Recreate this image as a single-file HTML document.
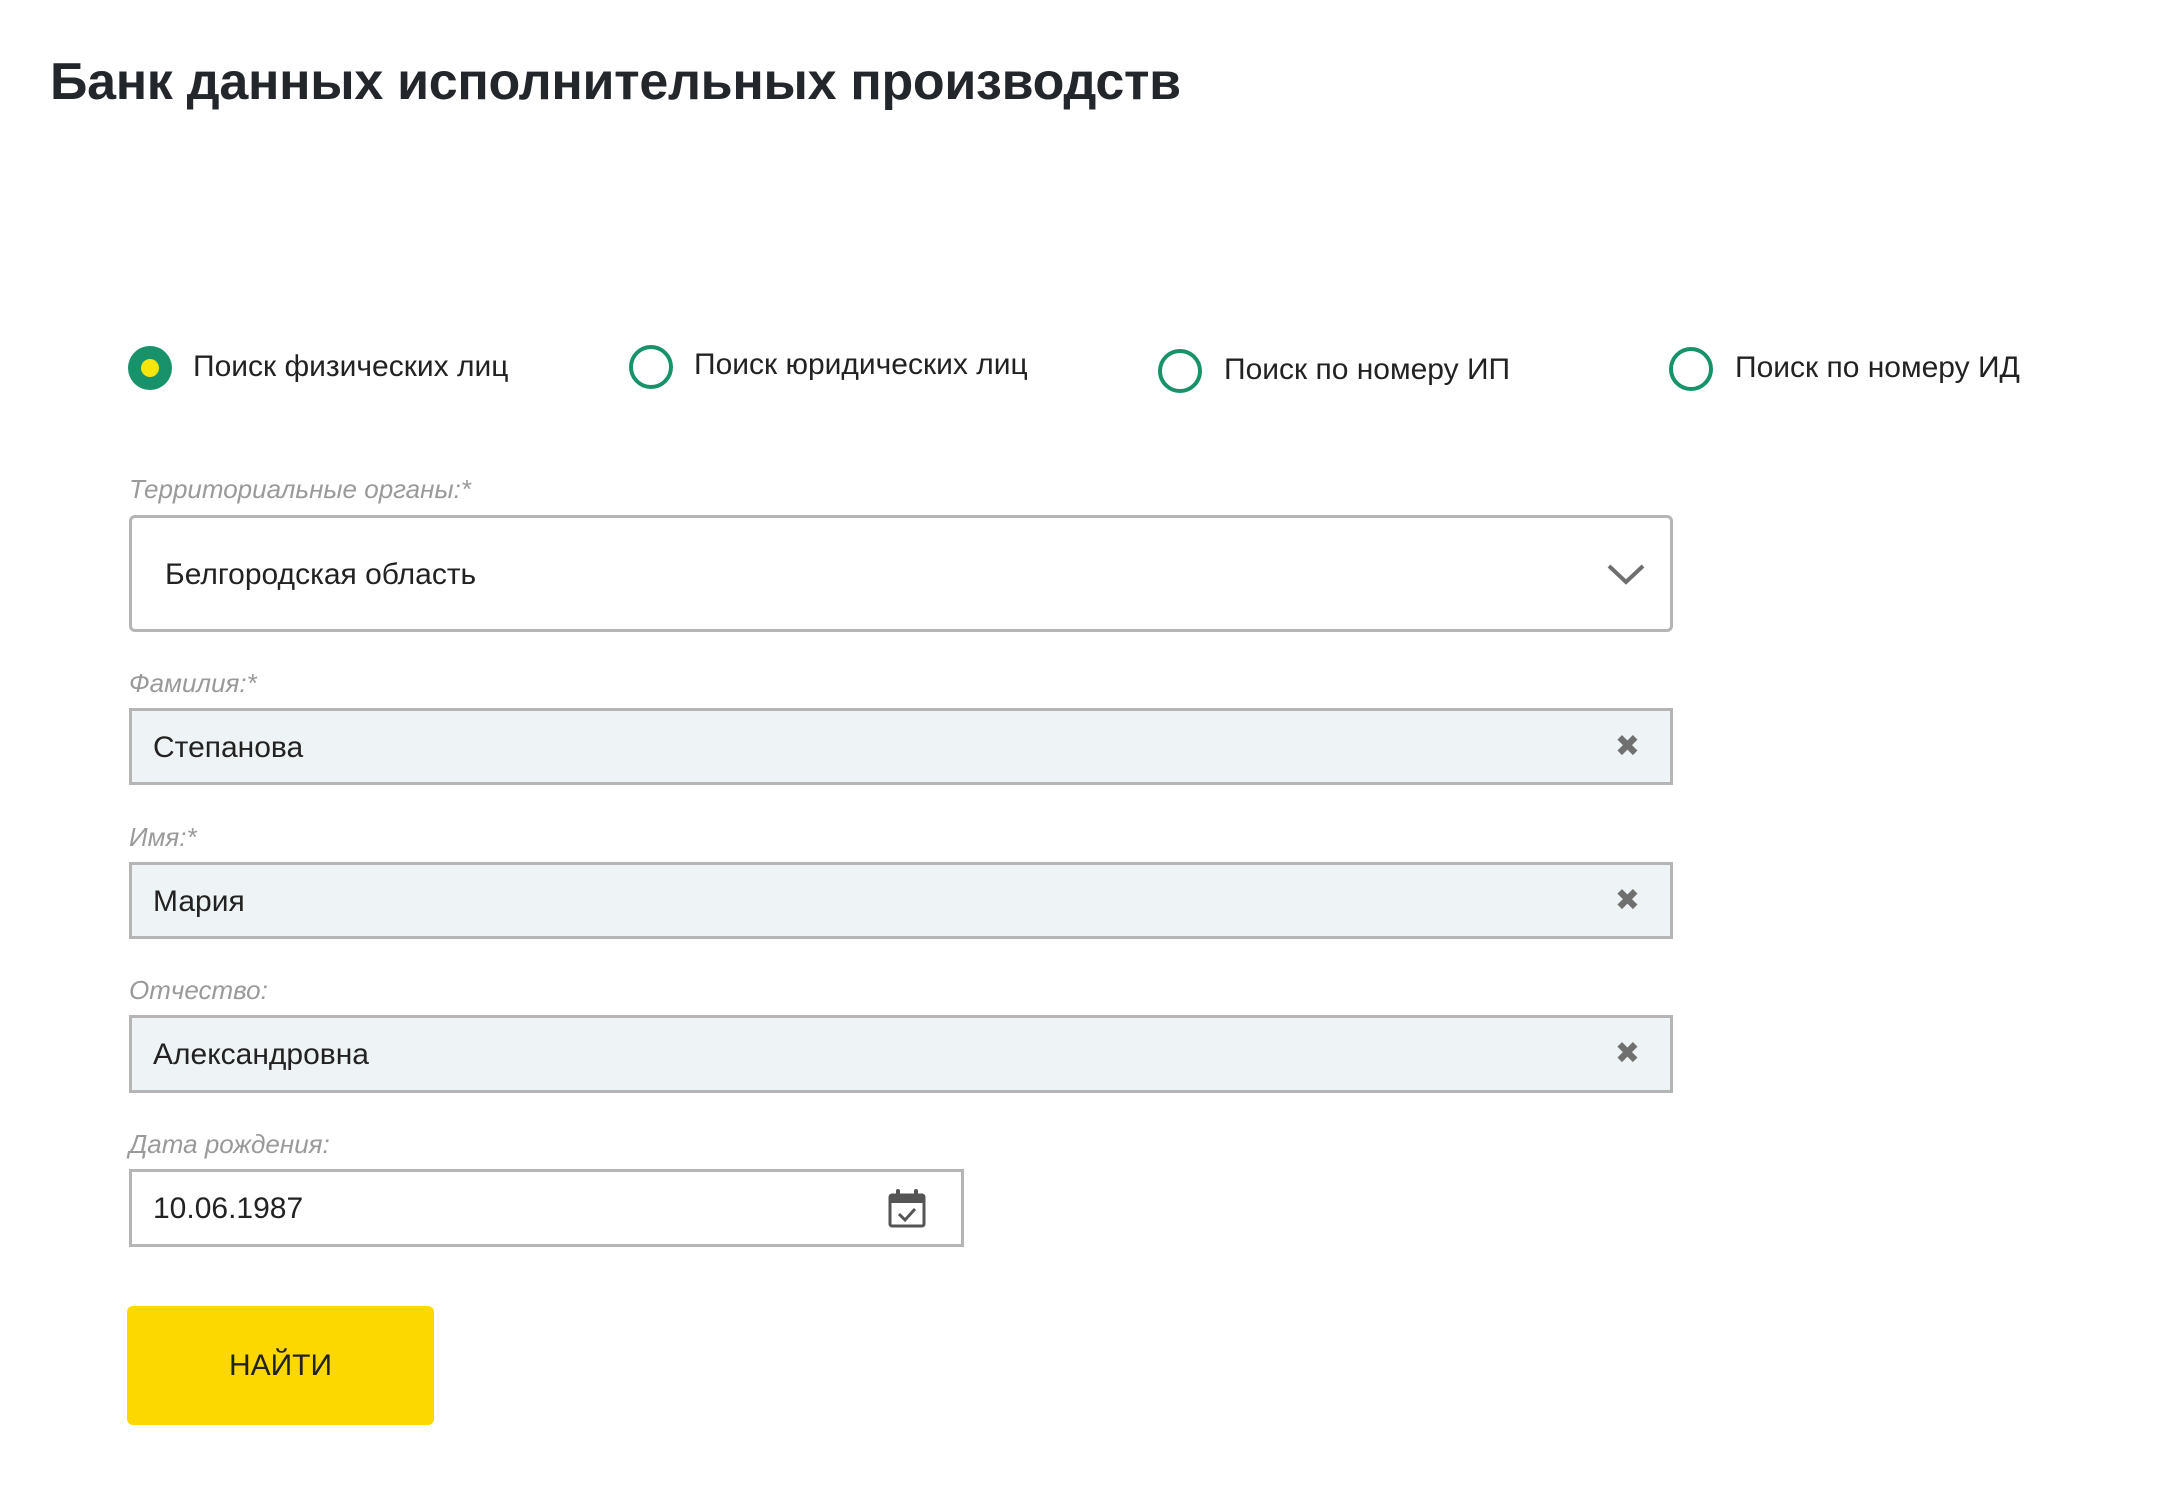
<!DOCTYPE html>
<html><head><meta charset="utf-8"><style>
*{margin:0;padding:0;box-sizing:border-box}
body{width:2174px;height:1504px;background:#fff;font-family:"Liberation Sans","DejaVu Sans",sans-serif;color:#222;position:relative;overflow:hidden}
.a{position:absolute;white-space:nowrap}
h1{position:absolute;left:50px;top:52px;font-size:52px;font-weight:bold;color:#23272b;letter-spacing:-0.3px}
.r{position:absolute;width:44px;height:44px;border-radius:50%;border:4px solid #17926a;background:#fff}
.r.on{background:#17926a;border:none}
.r.on::after{content:"";position:absolute;left:13px;top:13px;width:18px;height:18px;border-radius:50%;background:#f6e60c}
.rt{position:absolute;font-size:30px;color:#222;white-space:nowrap}
.lb{position:absolute;left:129px;font-size:26px;font-style:italic;color:#9a9a9a}
.in{position:absolute;left:129px;width:1544px;border:3px solid #b5b5b5;background:#eef3f5;font-size:30px;color:#222}
.in span{position:absolute;left:21px}
.x{position:absolute;right:30px;font-size:30px;color:#707070;font-weight:bold}
</style></head><body>
<h1>Банк данных исполнительных производств</h1>

<div class="r on" style="left:128px;top:346px"></div><div class="rt" style="left:193px;top:350px">Поиск физических лиц</div>
<div class="r" style="left:629px;top:345px"></div><div class="rt" style="left:694px;top:348px">Поиск юридических лиц</div>
<div class="r" style="left:1158px;top:349px"></div><div class="rt" style="left:1224px;top:353px">Поиск по номеру ИП</div>
<div class="r" style="left:1669px;top:347px"></div><div class="rt" style="left:1735px;top:351px">Поиск по номеру ИД</div>

<div class="lb" style="top:474px">Территориальные органы:*</div>
<div class="in" style="top:515px;height:117px;background:#fff;border-radius:6px"><span style="left:33px;top:40px">Белгородская область</span>
<svg style="position:absolute;right:24px;top:45px" width="40" height="24" viewBox="0 0 40 24"><path d="M3 3 L20 19 L37 3" fill="none" stroke="#6f6f6f" stroke-width="4"/></svg></div>

<div class="lb" style="top:668px">Фамилия:*</div>
<div class="in" style="top:708px;height:77px"><span style="top:20px">Степанова</span><div class="x" style="top:18px">✖</div></div>

<div class="lb" style="top:822px">Имя:*</div>
<div class="in" style="top:862px;height:77px"><span style="top:20px">Мария</span><div class="x" style="top:18px">✖</div></div>

<div class="lb" style="top:975px">Отчество:</div>
<div class="in" style="top:1015px;height:78px"><span style="top:20px">Александровна</span><div class="x" style="top:18px">✖</div></div>

<div class="lb" style="top:1129px">Дата рождения:</div>
<div class="in" style="top:1169px;height:78px;width:835px;background:#fff"><span style="top:20px">10.06.1987</span>
<svg style="position:absolute;left:755px;top:15px" width="40" height="42" viewBox="0 0 40 42"><rect x="3" y="8" width="34" height="31" rx="2" fill="none" stroke="#555" stroke-width="3"/><rect x="3" y="8" width="34" height="8" fill="#555"/><rect x="9" y="2" width="4" height="10" rx="2" fill="#555"/><rect x="27" y="2" width="4" height="10" rx="2" fill="#555"/><path d="M12 27 L18 33 L28 22" fill="none" stroke="#555" stroke-width="3"/></svg></div>

<div class="a" style="left:127px;top:1306px;width:307px;height:119px;background:#fdd800;border-radius:6px;font-size:30px;color:#222;text-align:center;line-height:119px">НАЙТИ</div>
</body></html>
